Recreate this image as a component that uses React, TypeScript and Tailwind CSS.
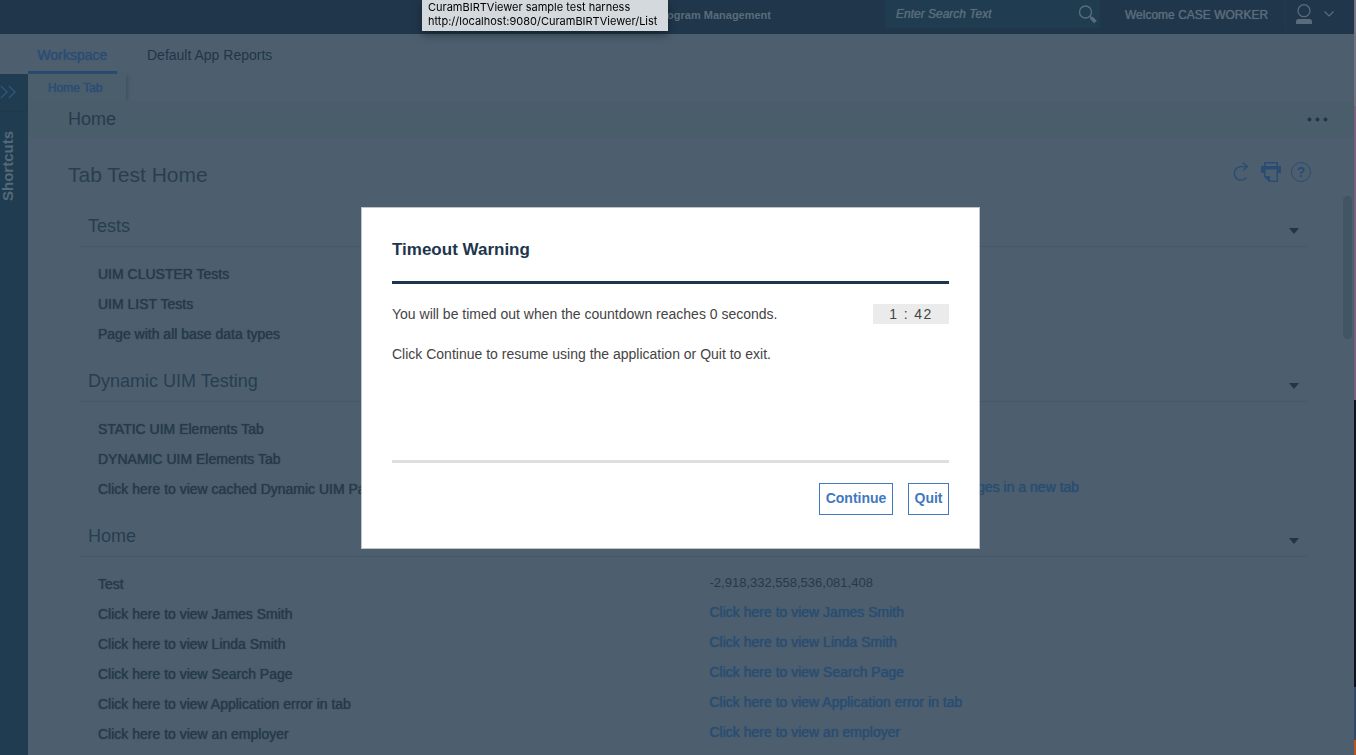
import React from "react";

type Row = { label: string; value?: string; link?: boolean };
type Section = { title: string; rows: Row[] };

const sections: Section[] = [
  {
    title: "Tests",
    rows: [
      { label: "UIM CLUSTER Tests" },
      { label: "UIM LIST Tests" },
      { label: "Page with all base data types" },
    ],
  },
  {
    title: "Dynamic UIM Testing",
    rows: [
      { label: "STATIC UIM Elements Tab" },
      { label: "DYNAMIC UIM Elements Tab" },
      {
        label: "Click here to view cached Dynamic UIM Pages",
        value: "Click here to view cached Dynamic UIM Pages in a new tab",
        link: true,
      },
    ],
  },
  {
    title: "Home",
    rows: [
      { label: "Test", value: "-2,918,332,558,536,081,408" },
      { label: "Click here to view James Smith", value: "Click here to view James Smith", link: true },
      { label: "Click here to view Linda Smith", value: "Click here to view Linda Smith", link: true },
      { label: "Click here to view Search Page", value: "Click here to view Search Page", link: true },
      {
        label: "Click here to view Application error in tab",
        value: "Click here to view Application error in tab",
        link: true,
      },
      { label: "Click here to view an employer", value: "Click here to view an employer", link: true },
    ],
  },
];

function TopBar() {
  return (
    <header className="flex h-[34px] shrink-0 items-start justify-end bg-[#20364a] pr-5 text-[#5a6c7b]">
      <h1 className="mr-[114px] text-[11px] leading-[30px] font-bold whitespace-nowrap">Program Management</h1>
      <form className="flex h-7 w-[215px] items-center bg-[#203c50] pr-[3px] pl-[11px]" role="search">
        <input
          type="text"
          aria-label="Search"
          placeholder="Enter Search Text"
          className="min-w-0 flex-1 bg-transparent text-[12px] italic outline-none [text-shadow:0_0_1px_#5a6c7b] placeholder:text-[#5a6c7b] placeholder:opacity-100"
        />
        <button type="button" aria-label="Search">
          <svg width="19" height="19" viewBox="0 0 19 19" fill="none" stroke="currentColor">
            <circle cx="7.5" cy="7" r="6" strokeWidth="1.4" />
            <path d="M11.7 11.2l1.6 1.6" strokeWidth="1.4" />
            <path d="M13 12.5l4.5 4.5" strokeWidth="3.6" />
          </svg>
        </button>
      </form>
      <span className="ml-[25px] w-[160px] text-[12px] leading-[30px] whitespace-nowrap [text-shadow:0_0_1px_#5a6c7b]">
        Welcome CASE WORKER
      </span>
      <button type="button" aria-label="User menu" className="flex h-[30px] items-center border-l border-[#203c50] pb-[2px] pl-[10px]">
        <svg width="16" height="20" viewBox="0 0 16 20" fill="none">
          <circle cx="8" cy="6.7" r="6" stroke="currentColor" strokeWidth="1.3" />
          <path d="M0 20v-2.500q0-2.500 2.500-2.500h11q2.500 0 2.500 2.500V20z" fill="currentColor" />
        </svg>
        <svg className="ml-3" width="10" height="6" viewBox="0 0 10 6" fill="none" stroke="currentColor">
          <path d="M.5.500L5 5 9.500.500" strokeWidth="1.2" />
        </svg>
      </button>
    </header>
  );
}

function NavTabs() {
  return (
    <nav className="flex h-10 shrink-0 pl-7 text-[14px] leading-[42px]">
      <a
        href="#workspace"
        className="box-border w-[89px] border-b-[3px] border-[#284a70] text-center text-[#2b4d75] [text-shadow:0_0_1px_#2b4d75]"
      >
        Workspace
      </a>
      <a href="#reports" className="ml-[30px] text-[#20364a]">
        Default App Reports
      </a>
    </nav>
  );
}

function Sidebar() {
  return (
    <aside className="flex w-7 shrink-0 flex-col bg-[#203c50]">
      <button
        type="button"
        aria-label="Expand shortcuts"
        className="flex h-[38px] items-center border-b border-[#1f384b] pb-[2px] text-[#2f5680]"
      >
        <svg width="17" height="14" viewBox="0 0 17 14" fill="none" stroke="currentColor" strokeWidth="1.3">
          <path d="M1 1l6 6-6 6M9 1l6 6-6 6" />
        </svg>
      </button>
      <span className="mt-[19px] w-4 rotate-180 text-[15px] leading-4 font-bold text-[#566978] [writing-mode:vertical-rl]">
        Shortcuts
      </span>
    </aside>
  );
}

function PageActions() {
  return (
    <div className="flex items-center gap-[10px] text-[#284c72]">
      <button type="button" aria-label="Refresh">
        <svg width="20" height="20" viewBox="0 0 20 20" fill="none" stroke="currentColor" strokeWidth="1.3">
          <path d="M15.500 15.500A6.800 6.800 0 1 1 9.500 4.600H16M12 .800l4.500 3.800L12 8.500" />
        </svg>
      </button>
      <button type="button" aria-label="Print">
        <svg width="20" height="20" viewBox="0 0 20 20">
          <path
            fill="currentColor"
            fillRule="evenodd"
            d="M3 0h14v4h3v7h-3v9H8L3 14.500V11H0V4h3zM4.500 1.500V4h11V1.500zM4.500 7.500V14H9V18.500h6.500V7.500z"
          />
        </svg>
      </button>
      <button
        type="button"
        aria-label="Help"
        className="flex size-5 items-center justify-center rounded-full border border-current text-[14px] leading-none font-bold"
      >
        ?
      </button>
    </div>
  );
}

function SectionBlock({ section }: { section: Section }) {
  return (
    <section>
      <div className="flex h-[41px] items-center justify-between border-b border-[#44586a] pr-2 pl-2">
        <h3 className="text-[18px] text-[#263e52]">{section.title}</h3>
        <button type="button" aria-label={"Collapse " + section.title} className="pt-[10px]">
          <svg width="10" height="6" viewBox="0 0 10 6">
            <path d="M0 0h10L5 6z" fill="#20364a" />
          </svg>
        </button>
      </div>
      <dl className="mr-1 py-3 text-[14px]">
        {section.rows.map((row) => (
          <div key={row.label} className="grid h-[30px] grid-cols-2 whitespace-nowrap">
            <dt className="pl-[18px] leading-[30px] text-[#263a49] [text-shadow:0_0_1px_#263a49]">{row.label}</dt>
            <dd className="pl-[18px] leading-[26px] text-[#263a49]">
              {row.link ? (
                <a href="#view" className="text-[#294d72] [text-shadow:0_0_1px_#294d72]">
                  {row.value}
                </a>
              ) : (
                <span className="text-[13px]">{row.value}</span>
              )}
            </dd>
          </div>
        ))}
      </dl>
    </section>
  );
}

function Workspace() {
  return (
    <main className="flex min-w-0 flex-1 flex-col">
      <div className="flex h-[27px] shrink-0">
        <a
          href="#home"
          className="w-[98px] bg-[#4b5e6c] pl-5 text-[12px] leading-7 text-[#2b4d75] shadow-[3px_0_3px_-1px_#405361] [text-shadow:0_0_1px_#2b4d75]"
        >
          Home Tab
        </a>
      </div>
      <div className="relative flex h-9 shrink-0 items-center justify-between bg-[#4a5d6a] pr-[26px] pl-10">
        <h2 className="text-[18px] text-[#263b4d]">Home</h2>
        <button type="button" aria-label="More actions">
          <svg width="21" height="5" viewBox="0 0 21 5" fill="#20364a">
            <circle cx="2.500" cy="2.500" r="2" />
            <circle cx="10.500" cy="2.500" r="2" />
            <circle cx="18.500" cy="2.500" r="2" />
          </svg>
        </button>
      </div>
      <div className="flex h-[59px] shrink-0 items-start justify-between pr-[43px] pl-10">
        <h2 className="pt-6 text-[21px] leading-7 text-[#293e4f]">Tab Test Home</h2>
        <div className="pt-[25px]">
          <PageActions />
        </div>
      </div>
      <div className="flex min-h-0 flex-1 overflow-hidden">
        <div className="min-w-0 flex-1 pt-[10px] pr-9 pl-[52px]">
          {sections.map((s) => (
            <SectionBlock key={s.title} section={s} />
          ))}
        </div>
        <div className="mr-[2px] h-[143px] w-[9px] rounded-full bg-[#415563]" />
      </div>
    </main>
  );
}

function TimeoutDialog() {
  return (
    <div className="fixed inset-0 flex items-center justify-center pr-[15px]">
      <div
        role="dialog"
        aria-labelledby="timeout-title"
        className="w-[619px] border border-[#bfc4c8] bg-white px-[30px] pt-7 pb-[33px] text-[14px] text-[#444]"
      >
        <h2
          id="timeout-title"
          className="border-b-[3px] border-[#1d364d] pb-[17px] text-[17px] leading-7 font-bold text-[#1d364d]"
        >
          Timeout Warning
        </h2>
        <div className="flex h-[179px] items-start justify-between border-b-[3px] border-[#dfdfdf] pt-5">
          <div className="leading-5">
            <p>You will be timed out when the countdown reaches 0 seconds.</p>
            <p className="mt-5">Click Continue to resume using the application or Quit to exit.</p>
          </div>
          <div role="timer" className="h-5 w-[76px] bg-[#ebebeb] text-center leading-5 tracking-widest whitespace-pre">
            1 : 42
          </div>
        </div>
        <div className="mt-5 flex justify-end gap-[15px] font-bold text-[#4178be]">
          <button type="button" className="h-8 w-[74px] border border-[#4178be]">
            Continue
          </button>
          <button type="button" className="h-8 w-[41px] border border-[#4178be]">
            Quit
          </button>
        </div>
      </div>
    </div>
  );
}

export default function App() {
  return (
    <div className="relative flex h-screen overflow-hidden bg-[#4d5f6e] font-['Liberation_Sans',Arial,sans-serif]">
      <div className="flex min-w-0 flex-1 flex-col">
        <TopBar />
        <NavTabs />
        <div className="flex min-h-0 flex-1">
          <Sidebar />
          <Workspace />
        </div>
      </div>
      <div className="flex w-[2px] flex-col">
        <div className="h-[14%] bg-[#76717f]" />
        <div className="h-[39%] bg-[#77607c]" />
        <div className="h-[38%] bg-[#10131c]" />
        <div className="h-[7%] bg-[#34486a]" />
        <div className="flex-1 bg-[#b4561f]" />
      </div>
      <TimeoutDialog />
      <div
        role="tooltip"
        className="absolute top-0 left-[422px] h-[31px] w-[246px] bg-[#d4d9dd] pl-[6px] font-['Inter',sans-serif] text-[11px] leading-[14px] whitespace-nowrap text-black shadow-[0_4px_10px_rgba(0,0,0,0.35)]"
      >
        <p>CuramBIRTViewer sample test harness</p>
        <p>http://localhost:9080/CuramBIRTViewer/List</p>
      </div>
    </div>
  );
}
